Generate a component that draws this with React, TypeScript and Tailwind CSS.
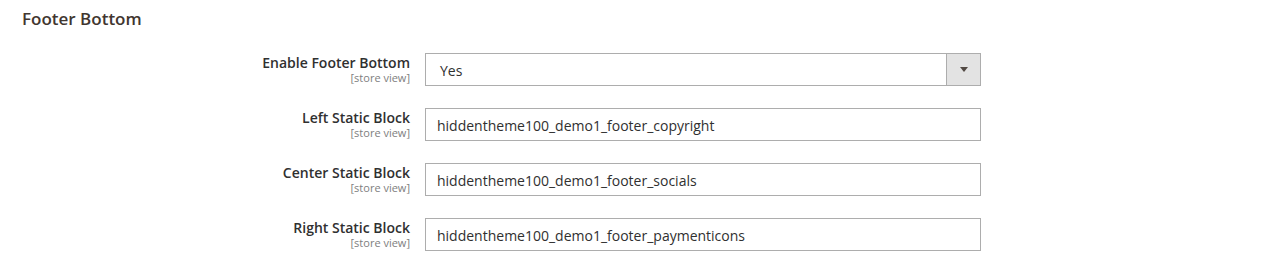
import React from "react";

const rows = [
  { label: "Left Static Block", value: "hiddentheme100_demo1_footer_copyright" },
  { label: "Center Static Block", value: "hiddentheme100_demo1_footer_socials" },
  { label: "Right Static Block", value: "hiddentheme100_demo1_footer_paymenticons" },
];

function Label({ text }: { text: string }) {
  return (
    <div className="w-[410px] shrink-0 text-right pr-0">
      <div className="text-[14px] leading-[19px] font-semibold text-[#303030]">{text}</div>
      <div className="text-[11px] leading-[12px] text-[#808080]">[store view]</div>
    </div>
  );
}

export default function App() {
  return (
    <div
      className="w-[1288px] h-[269px] bg-white overflow-hidden"
      style={{ fontFamily: '"Open Sans", sans-serif' }}
    >
      <div className="pl-[22px] pt-[8px] h-[53px]">
        <h2 className="text-[17px] leading-[22px] font-semibold text-[#41362f]">Footer Bottom</h2>
      </div>
      <div className="flex flex-col gap-[22px]">
        <div className="flex">
          <Label text="Enable Footer Bottom" />
          <div className="ml-[15px] w-[556px] h-[33px] border border-[#adadad] flex bg-white">
            <div className="flex-1 pl-[14px] pt-[2px] flex items-center text-[14px] text-[#303030]">Yes</div>
            <div className="w-[34px] border-l border-[#adadad] bg-[#e3e3e3] flex items-center justify-center">
              <svg width="8" height="5" viewBox="0 0 8 5">
                <polygon points="0,0 8,0 4,5" fill="#514943" />
              </svg>
            </div>
          </div>
        </div>
        {rows.map((r) => (
          <div className="flex" key={r.label}>
            <Label text={r.label} />
            <div className="ml-[15px] w-[556px] h-[33px] border border-[#adadad] pl-[11px] pt-[2px] flex items-center text-[14px] text-[#303030] bg-white">
              {r.value}
            </div>
          </div>
        ))}
      </div>
    </div>
  );
}
